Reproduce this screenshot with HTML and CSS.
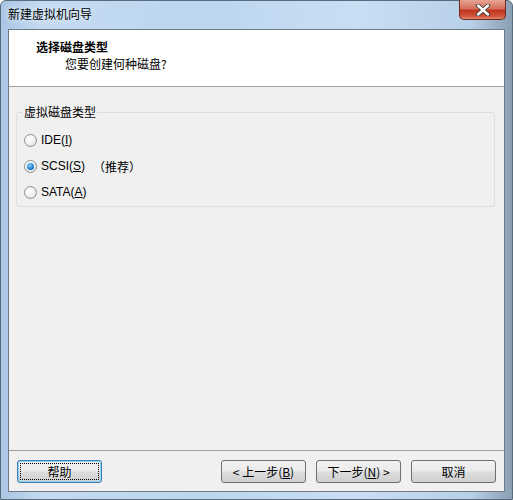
FILE: index.html
```html
<!DOCTYPE html>
<html>
<head>
<meta charset="utf-8">
<link rel="stylesheet" href="styles.css">
</head>
<body>
<div class="window">
  <div class="titlebar">
    <span class="title">新建虚拟机向导</span>
    <div class="close">
      <svg width="16" height="12" viewBox="0 0 16 12"><path d="M3 1.5 L13 10.5 M13 1.5 L3 10.5" stroke="#3a3a3a" stroke-width="4.2" stroke-linecap="round"/><path d="M3 1.5 L13 10.5 M13 1.5 L3 10.5" stroke="#ffffff" stroke-width="2.4" stroke-linecap="round"/></svg>
    </div>
  </div>
  <div class="client">
    <div class="header">
      <div class="h-title">选择磁盘类型</div>
      <div class="h-sub">您要创建何种磁盘?</div>
    </div>
    <div class="body">
      <fieldset class="group">
        <legend>虚拟磁盘类型</legend>
        <div class="opt"><span class="radio"></span><span class="lat">IDE(<u>I</u>)</span></div>
        <div class="opt"><span class="radio on"></span><span class="lat">SCSI(<u>S</u>)</span><span class="rec">（推荐）</span></div>
        <div class="opt"><span class="radio"></span><span class="lat">SATA(<u>A</u>)</span></div>
      </fieldset>
      <div class="spacer"></div>
      <div class="footer">
        <button class="btn focus">帮助</button>
        <div class="grow"></div>
        <button class="btn">&lt; 上一步(<u>B</u>)</button>
        <button class="btn">下一步(<u>N</u>) &gt;</button>
        <button class="btn">取消</button>
      </div>
    </div>
  </div>
</div>
</body>
</html>
```
FILE: styles.css
```css
* { box-sizing: border-box; }
html, body { margin: 0; padding: 0; }
body { width: 513px; height: 500px; overflow: hidden; font-family: "Noto Sans CJK SC", sans-serif; font-size: 12px; color: #000; }
.window {
  width: 513px; height: 500px;
  background: linear-gradient(90deg, #a9c6e4 0%, #c4daf1 8%, #bcd6f0 40%, #c9def3 70%, #b7cfe8 92%, #8a9fb3 100%);
  border: 1px solid #5a6b7c;
  border-radius: 6px 6px 0 0;
  display: flex; flex-direction: column;
  padding: 0 7px 7px 7px;
}
.titlebar { height: 28px; display: flex; align-items: flex-start; position: relative; }
.title { margin-top: 5px; font-size: 12px; line-height: 16px; color: #000; text-shadow: 0 0 6px #fff; }
.close {
  position: absolute; right: -1px; top: -1px;
  width: 47px; height: 20px;
  border: 1px solid #6b2a24; border-top: none;
  border-radius: 0 0 5px 5px;
  background: linear-gradient(#e8a493 0%, #d4705c 45%, #c0341e 55%, #d0533a 85%, #e08a6c 100%);
  display: flex; align-items: center; justify-content: center;
}
.client { flex: 1; display: flex; flex-direction: column; background: #f0f0f0; border: 1px solid #6f7b87; }
.header { height: 57px; background: #fff; border-bottom: 1px solid #a0a0a0; padding: 10px 0 0 27px; }
.h-title { font-weight: bold; line-height: 14px; }
.h-sub { margin: 3px 0 0 29px; line-height: 14px; }
.body { flex: 1; display: flex; flex-direction: column; }
.group {
  margin: 18px 9px 0 7px; padding: 8px 0 1px 7px;
  border: 1px solid #d5dfe5; border-radius: 3px;
  min-width: 0;
}
.group legend { padding: 0 1px; margin-left: -1px; line-height: 14px; }
.opt { display: flex; align-items: center; height: 26px; }
.radio {
  width: 13px; height: 13px; border-radius: 50%;
  border: 1px solid #8e8f8f;
  background: radial-gradient(circle at 40% 35%, #ffffff 0%, #f0f0f0 50%, #d4d4d4 100%);
  margin-right: 4px; flex: none; position: relative;
}
.radio.on::after {
  content: ""; position: absolute; left: 2px; top: 2px; width: 7px; height: 7px; border-radius: 50%;
  background: radial-gradient(circle at 40% 35%, #8fd0f5 0%, #2a8ad6 50%, #0f4f8a 100%);
}
.lat { font-family: "Liberation Sans", "Noto Sans CJK SC", sans-serif; font-size: 12px; }
.rec { margin-left: 8px; }
.spacer { flex: 1; }
.footer { border-top: 1px solid #a0a0a0; height: 41px; display: flex; align-items: flex-start; padding: 9px 8px 0 8px; gap: 10px; }
.grow { flex: 1; }
.btn {
  width: 85px; height: 23px;
  font-family: "Noto Sans CJK SC", sans-serif; font-size: 12px; color: #000;
  border: 1px solid #707070; border-radius: 3px;
  background: linear-gradient(#f2f2f2 0%, #ebebeb 48%, #dddddd 52%, #cfcfcf 100%);
  padding: 0; line-height: 20px;
}
.btn.focus { border-color: #3c7fb1; box-shadow: inset 0 0 0 1px #8cd3f5; outline: 1px dotted #000; outline-offset: -4px; }
```
